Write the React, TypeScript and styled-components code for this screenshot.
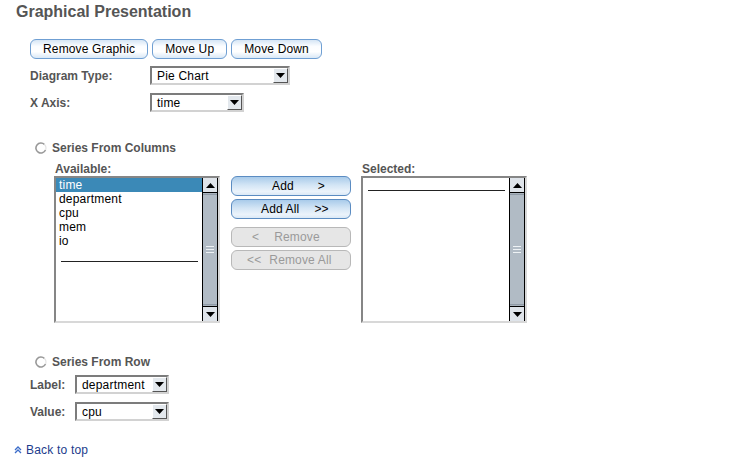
import React from 'react'
import styled, { createGlobalStyle, css } from 'styled-components'

const GlobalStyle = createGlobalStyle`
  body {
    margin: 0;
    background: #fff;
    font-family: "Liberation Sans", Arial, sans-serif;
    font-size: 12px;
    color: #000;
  }
`

const Page = styled.div`
  width: 740px;
  height: 467px;
  position: relative;
  padding-top: 3px;
  box-sizing: border-box;
`

const Title = styled.h2`
  margin: 0 0 0 16px;
  font-size: 16px;
  line-height: 18px;
  font-weight: bold;
  color: #555;
`

const Section = styled.div`
  padding-left: 30px;
  display: flex;
  flex-direction: column;
`

const ButtonRow = styled.div`
  display: flex;
  gap: 4px;
  margin-top: 18px;
`

const Button = styled.button<{ $primary?: boolean; $width?: number; $pad?: number }>`
  height: 20px;
  padding: 0 12px;
  border: 1px solid #6f9fd3;
  border-radius: 6px;
  font-family: "Liberation Sans", Arial, sans-serif;
  font-size: 12px;
  letter-spacing: 0.15px;
  color: #000;
  background: linear-gradient(to bottom, #d5e5f5 0%, #fbfdff 35%, #ffffff 65%, #d9e8f6 100%);
  display: flex;
  align-items: center;
  justify-content: center;
  white-space: pre;
  cursor: pointer;
  ${p => p.$width && css`width: ${p.$width}px;`}
  ${p => p.$pad !== undefined && css`
    justify-content: flex-start;
    padding-left: ${p.$pad}px;
  `}
  ${p => p.$primary && css`
    border-color: #5b8cc2;
    background: linear-gradient(to bottom, #a9cbea 0%, #d3e5f5 45%, #ebf3fb 80%, #dbe9f6 100%);
  `}
  &:disabled {
    border-color: #b8b8b8;
    background: #e6e6e6;
    color: #9a9a9a;
    cursor: default;
  }
`

const Gap = styled.span<{ $w: number }>`
  display: inline-block;
  width: ${p => p.$w}px;
`

const FieldRow = styled.div<{ $labelWidth: number; $top: number }>`
  display: flex;
  align-items: center;
  margin-top: ${p => p.$top}px;
  & > label {
    width: ${p => p.$labelWidth}px;
    font-weight: bold;
    color: #555;
  }
`

const SelectBox = styled.div<{ $width: number }>`
  width: ${p => p.$width}px;
  height: 19px;
  box-sizing: border-box;
  border-style: solid;
  border-width: 2px;
  border-color: #7c7c7c #d2d2d2 #d2d2d2 #7c7c7c;
  background: #fff;
  display: flex;
  align-items: center;
  padding-left: 5px;
  font-size: 12px;
  letter-spacing: 0.2px;
`

const SelectText = styled.span`
  flex: 1;
`

const ArrowBtn = styled.span`
  width: 15px;
  height: 15px;
  box-sizing: border-box;
  background: #e3e8ed;
  border-right: 1px solid #555;
  border-bottom: 1px solid #555;
  border-top: 1px solid #fff;
  border-left: 1px solid #fff;
  display: flex;
  align-items: center;
  justify-content: center;
`

const RadioRow = styled.div<{ $top: number }>`
  display: flex;
  align-items: center;
  gap: 5px;
  margin-left: 5px;
  margin-top: ${p => p.$top}px;
  font-weight: bold;
  color: #555;
`

const Columns = styled.div`
  display: flex;
  margin-left: 24px;
  margin-top: 7px;
`

const ListColumn = styled.div`
  display: flex;
  flex-direction: column;
`

const ListLabel = styled.div`
  font-weight: bold;
  color: #555;
  line-height: 14px;
  margin-left: 1px;
`

const ListBox = styled.div`
  width: 166px;
  height: 147px;
  box-sizing: border-box;
  border-style: solid;
  border-width: 2px;
  border-color: #868686 #d8d8d8 #d8d8d8 #868686;
  display: flex;
  background: #fff;
`

const Items = styled.div`
  flex: 1;
  display: flex;
  flex-direction: column;
  letter-spacing: 0.2px;
`

const Item = styled.div<{ $selected?: boolean }>`
  height: 14px;
  line-height: 14px;
  padding-left: 3px;
  ${p => p.$selected && css`
    background: #3b89b7;
    color: #fff;
  `}
`

const Separator = styled.div<{ $top: number }>`
  margin: ${p => p.$top}px 4px 0 5px;
  border-top: 1px solid #222;
`

const ScrollBar = styled.div`
  width: 16px;
  box-sizing: border-box;
  display: flex;
  flex-direction: column;
  border-left: 1px solid #000;
  border-right: 1px solid #000;
  background: #a9b3bd;
`

const ScrollBtn = styled.div`
  height: 14px;
  background: #dfe4ea;
  border-bottom: 1px solid #000;
  display: flex;
  align-items: center;
  justify-content: center;
  &:last-child {
    border-bottom: none;
    border-top: 1px solid #000;
  }
`

const Thumb = styled.div`
  flex: 1;
  margin: 1px 0;
  background: #b1bbc5;
  border-top: 1px solid #8f9aa6;
  border-bottom: 1px solid #8f9aa6;
  display: flex;
  align-items: center;
  justify-content: center;
`

const Grip = styled.div`
  width: 8px;
  height: 7px;
  background: repeating-linear-gradient(to bottom, #eef2f5 0 1px, transparent 1px 3px);
`

const MoveButtons = styled.div`
  display: flex;
  flex-direction: column;
  gap: 3px;
  margin: 14px 10px 0 11px;
  & > button:nth-child(3) {
    margin-top: 5px;
  }
`

const BackLink = styled.a`
  display: flex;
  align-items: center;
  gap: 4px;
  margin: 22px 0 0 14px;
  color: #1b3c8c;
  font-size: 12px;
  letter-spacing: 0.2px;
  text-decoration: none;
`

const Arrow = () => (
  <svg width="9" height="5" viewBox="0 0 9 5">
    <path d="M0 0h9L4.5 5z" fill="#000" />
  </svg>
)

const UpArrow = () => (
  <svg width="9" height="5" viewBox="0 0 9 5">
    <path d="M0 5h9L4.5 0z" fill="#000" />
  </svg>
)

const Radio = () => (
  <svg width="12" height="12" viewBox="0 0 12 12">
    <path d="M9.5 2.5A5 5 0 1 0 10.5 8" fill="none" stroke="#999" strokeWidth="1.6" />
    <path d="M10.5 8A5 5 0 0 0 9.5 2.5" fill="none" stroke="#e4e4e4" strokeWidth="1.2" />
  </svg>
)

const Select = ({ value, width }: { value: string; width: number }) => (
  <SelectBox $width={width}>
    <SelectText>{value}</SelectText>
    <ArrowBtn><Arrow /></ArrowBtn>
  </SelectBox>
)

const List = ({ items }: { items: string[] }) => (
  <ListBox>
    <Items>
      {items.map((it, i) => (
        <Item key={it} $selected={i === 0}>{it}</Item>
      ))}
      <Separator $top={items.length ? 13 : 12} />
    </Items>
    <ScrollBar>
      <ScrollBtn><UpArrow /></ScrollBtn>
      <Thumb><Grip /></Thumb>
      <ScrollBtn><Arrow /></ScrollBtn>
    </ScrollBar>
  </ListBox>
)

const App = () => {
  return (
    <Page>
      <GlobalStyle />
      <Title>Graphical Presentation</Title>
      <Section>
        <ButtonRow>
          <Button>Remove Graphic</Button>
          <Button>Move Up</Button>
          <Button>Move Down</Button>
        </ButtonRow>
        <FieldRow $labelWidth={120} $top={7}>
          <label>Diagram Type:</label>
          <Select value="Pie Chart" width={140} />
        </FieldRow>
        <FieldRow $labelWidth={120} $top={8}>
          <label>X Axis:</label>
          <Select value="time" width={94} />
        </FieldRow>

        <RadioRow $top={29}>
          <Radio />
          <span>Series From Columns</span>
        </RadioRow>
        <Columns>
          <ListColumn>
            <ListLabel>Available:</ListLabel>
            <List items={['time', 'department', 'cpu', 'mem', 'io']} />
          </ListColumn>
          <MoveButtons>
            <Button $primary $width={120} $pad={40}>Add<Gap $w={24} />&gt;</Button>
            <Button $primary $width={120} $pad={29}>Add All<Gap $w={15} />&gt;&gt;</Button>
            <Button $width={120} $pad={20} disabled>&lt;<Gap $w={15} />Remove</Button>
            <Button $width={120} $pad={15} disabled>&lt;&lt;<Gap $w={8} />Remove All</Button>
          </MoveButtons>
          <ListColumn>
            <ListLabel>Selected:</ListLabel>
            <List items={[]} />
          </ListColumn>
        </Columns>

        <RadioRow $top={32}>
          <Radio />
          <span>Series From Row</span>
        </RadioRow>
        <FieldRow $labelWidth={45} $top={6}>
          <label>Label:</label>
          <Select value="department" width={94} />
        </FieldRow>
        <FieldRow $labelWidth={45} $top={8}>
          <label>Value:</label>
          <Select value="cpu" width={94} />
        </FieldRow>
      </Section>
      <BackLink href="#">
        <svg width="8" height="8" viewBox="0 0 8 8">
          <path d="M1 4l3-3 3 3M1 7l3-3 3 3" fill="none" stroke="#3b6cc9" strokeWidth="1.3" />
        </svg>
        Back to top
      </BackLink>
    </Page>
  )
}

export default App
